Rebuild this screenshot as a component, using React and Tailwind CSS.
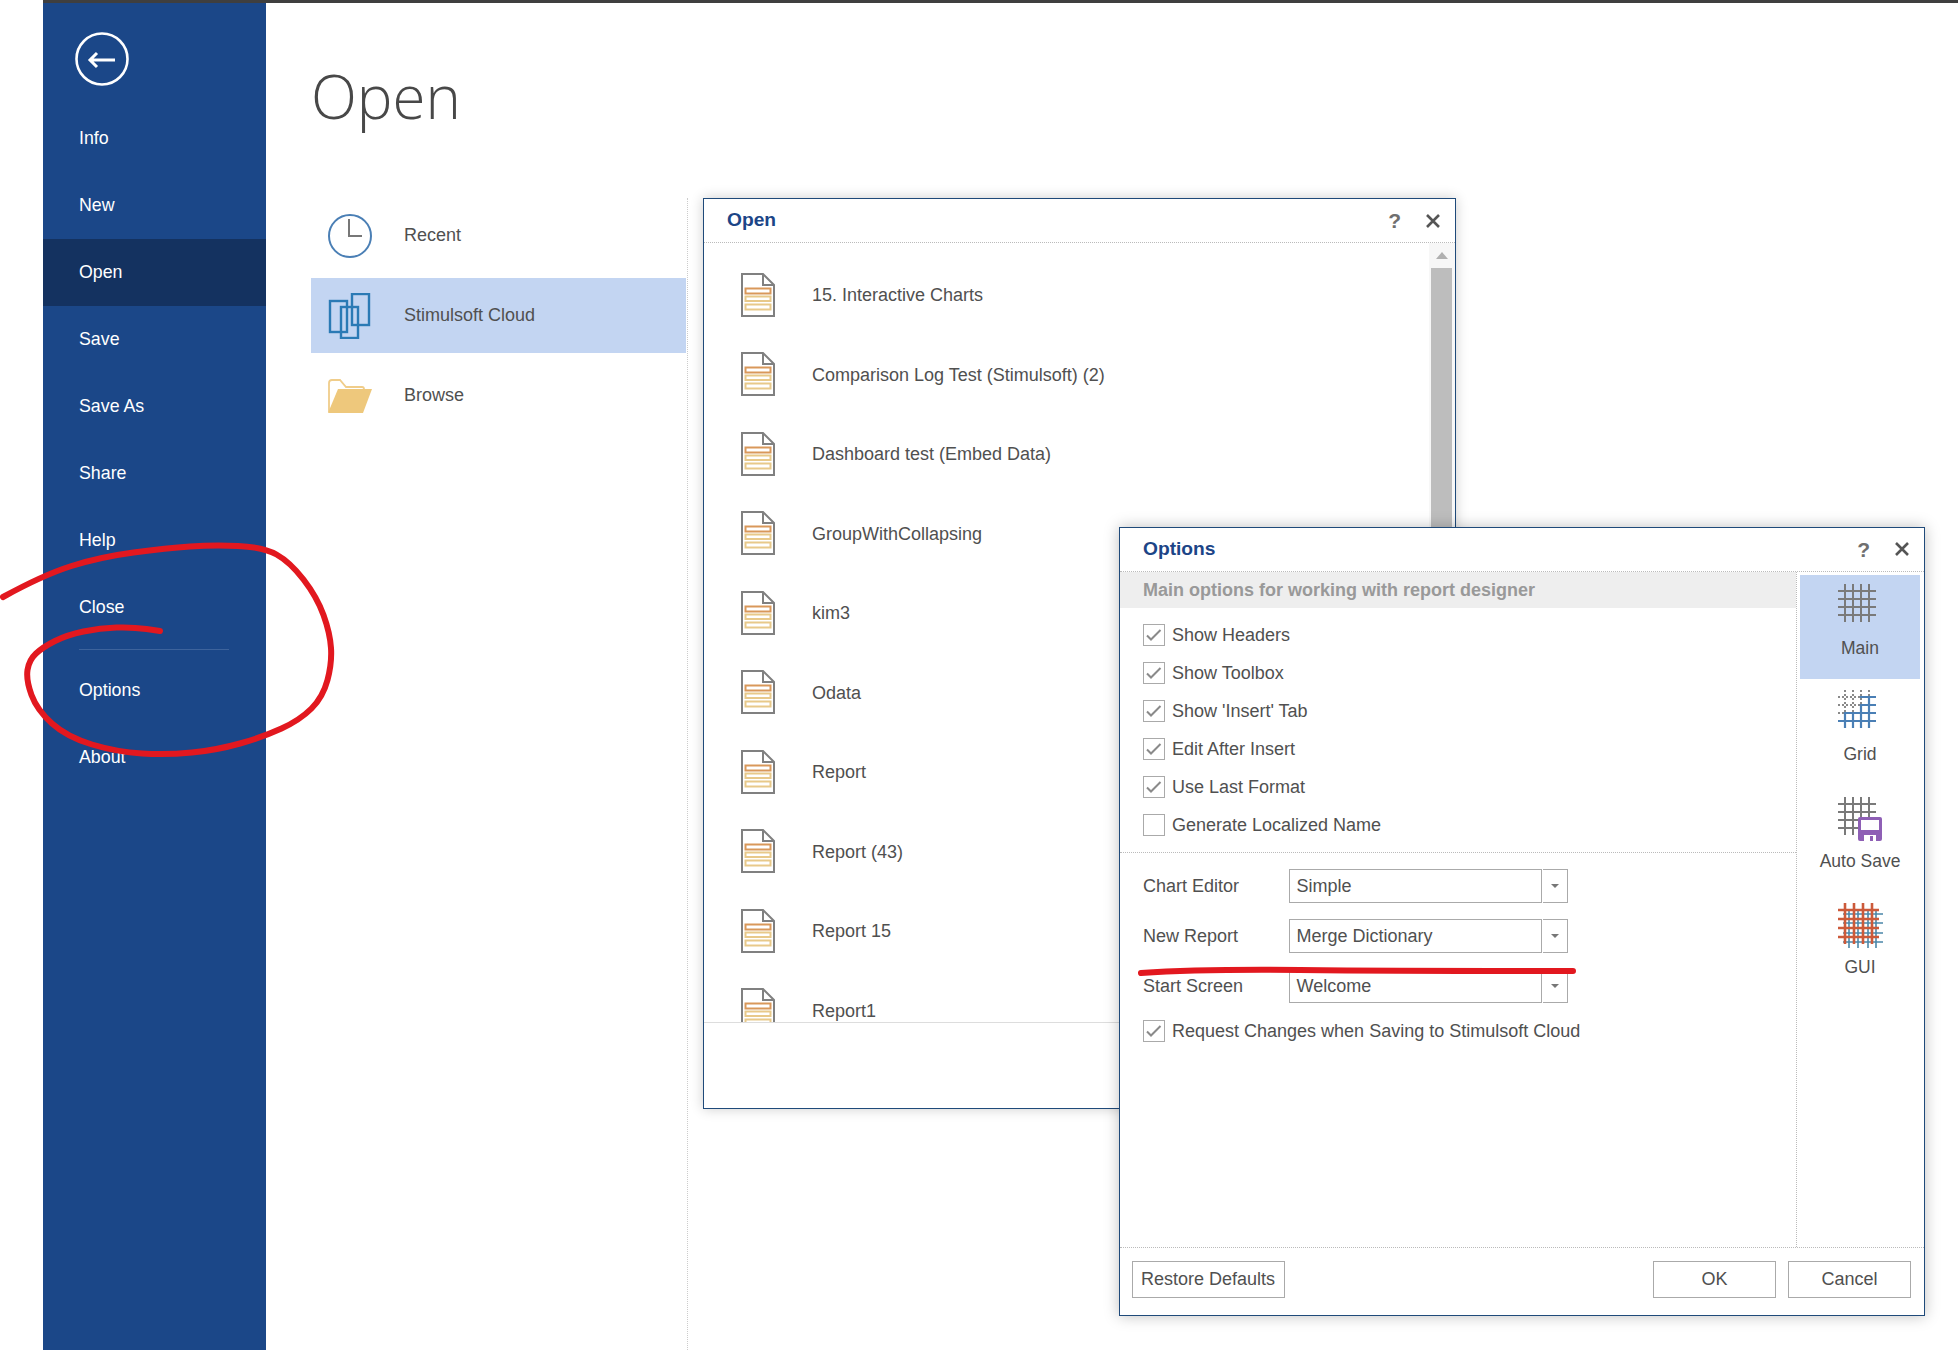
import React from 'react';

const SIDE = ['Info', 'New', 'Open', 'Save', 'Save As', 'Share', 'Help', 'Close'];
const FILES = ['15. Interactive Charts', 'Comparison Log Test (Stimulsoft) (2)', 'Dashboard test (Embed Data)', 'GroupWithCollapsing', 'kim3', 'Odata', 'Report', 'Report (43)', 'Report 15', 'Report1'];
const CHECKS = [["Show Headers", true], ["Show Toolbox", true], ["Show 'Insert' Tab", true], ["Edit After Insert", true], ["Use Last Format", true], ["Generate Localized Name", false]];
const SELECTS = [["Chart Editor", "Simple"], ["New Report", "Merge Dictionary"], ["Start Screen", "Welcome"]];

function smooth(pts) {
  let d = `M${pts[0][0]} ${pts[0][1]}`;
  for (let i = 1; i < pts.length - 1; i++) {
    const mx = (pts[i][0] + pts[i + 1][0]) / 2;
    const my = (pts[i][1] + pts[i + 1][1]) / 2;
    d += ` Q${pts[i][0]} ${pts[i][1]} ${mx} ${my}`;
  }
  const l = pts[pts.length - 1];
  return d + ` L${l[0]} ${l[1]}`;
}
const LOOP = [[3,597],[43,575],[100,557],[167,548],[213,545],[263,547],[290,562],[317,597],[330,633],[332,663],[323,697],[300,720],[263,737],[217,750],[167,755],[117,752],[67,737],[37,710],[26,680],[29,660],[43,647],[67,635],[100,628],[133,627],[160,631]];

function FileIcon() {
  return (
    <svg width="34" height="44" viewBox="0 0 34 44" fill="none" className="shrink-0">
      <path d="M1 1H22L33 12V43H1Z" stroke="#808080" strokeWidth="2" fill="#fff" />
      <path d="M22 1V12H33" stroke="#808080" strokeWidth="2" />
      <rect x="4.5" y="15.5" width="25" height="5" stroke="#d9985a" strokeWidth="2" />
      <rect x="4.5" y="23.5" width="25" height="4.5" stroke="#e8c98a" strokeWidth="2" />
      <rect x="4.5" y="31.5" width="25" height="5" stroke="#e8c98a" strokeWidth="2" />
    </svg>
  );
}

function CloseIcon() {
  return (
    <svg width="14" height="14" viewBox="0 0 14 14" fill="none">
      <path d="M1 1L13 13M13 1L1 13" stroke="#555" strokeWidth="2.6" />
    </svg>
  );
}

function DialogHeader({ title, h }) {
  return (
    <div className={`flex items-center justify-between border-b border-dotted border-[#bbbbbb] shrink-0 pl-[23px] ${h}`}>
      <span className="text-[19.2px] font-bold text-[#1c4587]">{title}</span>
      <div className="flex items-center gap-[25px] mr-[15px]">
        <span className="text-[21px] font-bold text-[#6f6f6f]">?</span>
        <CloseIcon />
      </div>
    </div>
  );
}

function Check({ label, on }) {
  return (
    <div className="flex items-center h-[38px] gap-[7px]">
      <div className="w-[22px] h-[22px] border border-[#aaaaaa] bg-white flex items-center justify-center shrink-0">
        {on && (
          <svg width="20" height="20" viewBox="0 0 20 20" fill="none">
            <path d="M3 10.5L7 14.5L16.5 5" stroke="#8a8a8a" strokeWidth="2" />
          </svg>
        )}
      </div>
      <span className="pt-[2px]">{label}</span>
    </div>
  );
}

function MainIcon() {
  const v = [7, 15, 23, 31];
  return (
    <svg width="38" height="38" viewBox="0 0 38 38">
      {v.map((p) => <path key={'v' + p} d={`M${p} 0V38`} stroke="#7a7a7a" strokeWidth="2" />)}
      {v.map((p) => <path key={'h' + p} d={`M0 ${p}H38`} stroke="#7a7a7a" strokeWidth="2" />)}
    </svg>
  );
}

function GridIcon() {
  const v = [7, 15, 23, 31];
  const g = '#8a8a8a';
  const b = '#4a7fb5';
  return (
    <svg width="38" height="38" viewBox="0 0 38 38">
      {v.map((p) => <path key={'v' + p} d={`M${p} 0V38`} stroke={g} strokeWidth="2" strokeDasharray="2 2" />)}
      {v.map((p) => <path key={'h' + p} d={`M0 ${p}H38`} stroke={g} strokeWidth="2" strokeDasharray="2 2" />)}
      <path d="M31 6V38M23 14V38M15 22V38M7 22V38" stroke={b} strokeWidth="2.2" fill="none" />
      <path d="M22 7H38M22 15H38M7 23H38M0 31H38" stroke={b} strokeWidth="2.2" fill="none" />
    </svg>
  );
}

function AutoSaveIcon() {
  const v = [7, 15, 23, 31];
  return (
    <svg width="44" height="44" viewBox="0 0 44 44" className="overflow-visible">
      {v.map((p) => <path key={'v' + p} d={`M${p} 0V38`} stroke="#7a7a7a" strokeWidth="2" />)}
      {v.map((p) => <path key={'h' + p} d={`M0 ${p}H38`} stroke="#7a7a7a" strokeWidth="2" />)}
      <rect x="20" y="20" width="24" height="24" rx="2" fill="#8e5fb5" />
      <rect x="23" y="23" width="18" height="10" fill="#fff" />
      <path d="M26 44V38H38V44Z" fill="#fff" />
      <rect x="32" y="39" width="3" height="5" fill="#8e5fb5" />
    </svg>
  );
}

function GuiIcon() {
  const o = '#cc5a3a';
  const b = '#4a86a8';
  return (
    <svg width="46" height="46" viewBox="0 0 46 46">
      {[12, 21, 31, 39].map((p) => <path key={'bv' + p} d={`M${p} 6V45`} stroke={b} strokeWidth="1.6" />)}
      {[11, 20, 30, 39].map((p) => <path key={'bh' + p} d={`M6 ${p}H46`} stroke={b} strokeWidth="1.6" />)}
      {[8, 17, 26, 35].map((p) => <path key={'ov' + p} d={`M${p} 0V41`} stroke={o} strokeWidth="2.6" />)}
      {[7, 16, 25, 34].map((p) => <path key={'oh' + p} d={`M1 ${p}H42`} stroke={o} strokeWidth="2.6" />)}
    </svg>
  );
}

function Tab({ label, active, children, top }) {
  return (
    <div className={`h-[104px] flex flex-col items-center text-[17.5px] ${active ? 'bg-[#c3d5f2]' : ''}`}>
      <div className={`h-[58px] w-[46px] flex pt-[9px] ${top}`}>{children}</div>
      <span className="mt-[2px]">{label}</span>
    </div>
  );
}

function Btn({ children, w }) {
  return (
    <div className={`h-[37px] border border-[#aaaaaa] flex items-center justify-center pt-[1px] ${w}`}>{children}</div>
  );
}

export default function App() {
  return (
    <div className="relative w-[1958px] h-[1350px] overflow-hidden bg-white pl-[43px] flex flex-col font-['Liberation_Sans',Arial,sans-serif] text-[18px] text-[#505050]">
      <div className="h-[3px] bg-[#3f3f3f] shrink-0" />
      <div className="flex flex-1 min-h-0">
        {/* Sidebar */}
        <nav className="w-[223px] bg-[#1b4788] text-white text-[17.8px] shrink-0">
          <div className="h-[101.5px] pl-[31px] pt-[28px]">
            <svg width="56" height="56" viewBox="0 0 56 56" fill="none">
              <circle cx="28" cy="28" r="25.5" stroke="#fff" strokeWidth="2.6" />
              <path d="M41 29H16M23 22L16 29L23 36" stroke="#fff" strokeWidth="3" />
            </svg>
          </div>
          {SIDE.map((s) => (
            <div key={s} className={`h-[67px] flex items-center pl-[36px] ${s === 'Open' ? 'bg-[#143260]' : ''}`}>{s}</div>
          ))}
          <div className="mt-[8px] mb-[7px] ml-[36px] w-[150px] h-[1.5px] bg-[#3d639c]" />
          <div className="h-[67px] flex items-center pl-[36px]">Options</div>
          <div className="h-[67px] flex items-center pl-[36px]">About</div>
        </nav>

        {/* Main */}
        <main className="flex-1 min-w-0 flex flex-col pl-[45px]">
          <div className="h-[195px] shrink-0 pt-[53px]">
            <h1 className="font-['Open_Sans',sans-serif] font-light text-[60px] leading-[80px] text-[#484848]">Open</h1>
          </div>
          <div className="w-[377px] flex-1 border-r border-dotted border-[#cccccc] pr-[1px] flex flex-col gap-[5px]">
            <div className="h-[75px] flex items-center pl-[17px] gap-[32px]">
              <svg width="44" height="44" viewBox="0 0 44 44" fill="none">
                <circle cx="22" cy="22" r="21" stroke="#4a7fb5" strokeWidth="2" />
                <path d="M21 5V22H34" stroke="#777" strokeWidth="2" />
              </svg>
              <span>Recent</span>
            </div>
            <div className="h-[75px] flex items-center pl-[17px] gap-[32px] bg-[#c3d5f2]">
              <svg width="44" height="46" viewBox="0 0 44 46" fill="none">
                <rect x="2" y="8" width="17" height="31" stroke="#2b7ab5" strokeWidth="2.4" />
                <rect x="13" y="14" width="17" height="31" stroke="#2b7ab5" strokeWidth="2.4" />
                <rect x="24" y="1" width="17" height="31" stroke="#2b7ab5" strokeWidth="2.4" />
              </svg>
              <span>Stimulsoft Cloud</span>
            </div>
            <div className="h-[75px] flex items-center pl-[17px] gap-[32px]">
              <svg width="44" height="34" viewBox="0 0 44 34" fill="none">
                <path d="M1 33V4Q1 1 4 1H12L18 8H34Q36 8 36 10" stroke="#f0cd8a" strokeWidth="1.8" />
                <path d="M0 34L10 10H44L35 34Z" fill="#eec87c" />
              </svg>
              <span>Browse</span>
            </div>
          </div>
        </main>
      </div>

      {/* Open dialog */}
      <section className="absolute left-[703px] top-[198px] w-[753px] h-[911px] bg-white border-[1.5px] border-[#1f4a7a] shadow-[0_0_12px_rgba(0,0,0,0.2)] flex flex-col">
        <DialogHeader title="Open" h="h-[44px]" />
        <div className="h-[780px] flex shrink-0 overflow-hidden border-b border-[#dddddd]">
          <div className="flex-1 pt-[12px] pl-[37px] overflow-hidden">
            {FILES.map((f) => (
              <div key={f} className="h-[79.5px] flex items-center gap-[37px]">
                <FileIcon />
                <span className="pt-[2px]">{f}</span>
              </div>
            ))}
          </div>
          <div className="w-[26px] shrink-0 flex flex-col items-center bg-[#f7f7f7] pr-[3px] pl-[2px]">
            <div className="h-[25px] flex items-center">
              <div className="w-0 h-0 border-x-[6px] border-x-transparent border-b-[7px] border-b-[#b0b0b0]" />
            </div>
            <div className="w-full flex-1 bg-[#bdbdbd]" />
          </div>
        </div>
      </section>

      {/* Options dialog */}
      <section className="absolute left-[1119px] top-[527px] w-[806px] h-[789px] bg-white border-[1.5px] border-[#1f4a7a] shadow-[0_0_14px_rgba(0,0,0,0.25)] flex flex-col">
        <DialogHeader title="Options" h="h-[43.5px]" />
        <div className="flex-1 flex min-h-0">
          <div className="flex-1 min-w-0">
            <div className="h-[36px] flex items-center pl-[23px] pt-[2px] bg-[#eeeeee] font-bold text-[#999999]">Main options for working with report designer</div>
            <div className="pl-[23px] py-[8px] border-b border-dotted border-[#bbbbbb]">
              {CHECKS.map(([l, on]) => <Check key={l} label={l} on={on} />)}
            </div>
            <div className="pl-[23px] pt-[16.5px] flex flex-col gap-[16.5px]">
              {SELECTS.map(([l, v]) => (
                <div key={l} className="flex items-center h-[33.5px]">
                  <span className="w-[146px] shrink-0 pt-[2px]">{l}</span>
                  <div className="w-[253px] h-full border border-[#aaaaaa] flex items-center pl-[6.5px] pt-[2px]">{v}</div>
                  <div className="w-[25px] h-full border border-[#aaaaaa] border-l-0 flex items-center justify-center ml-[1px]">
                    <div className="w-0 h-0 border-x-[4px] border-x-transparent border-t-[4px] border-t-[#777777]" />
                  </div>
                </div>
              ))}
            </div>
            <div className="pl-[23px] mt-[9px]">
              <Check label="Request Changes when Saving to Stimulsoft Cloud" on />
            </div>
          </div>
          <div className="w-[128px] shrink-0 border-l border-dotted border-[#bbbbbb] pl-[3px] pr-[4px] pt-[3px] flex flex-col gap-[2.5px]">
            <Tab label="Main" active top="pl-[1px]"><MainIcon /></Tab>
            <Tab label="Grid" top="pl-[1px]"><GridIcon /></Tab>
            <Tab label="Auto Save" top="pl-[1px]"><AutoSaveIcon /></Tab>
            <Tab label="GUI" top="pl-[0px]"><GuiIcon /></Tab>
          </div>
        </div>
        <div className="h-[68px] shrink-0 border-t border-dotted border-[#bbbbbb] flex items-start pt-[12.5px] justify-between pl-[11.5px] pr-[13px]">
          <Btn w="w-[153px]">Restore Defaults</Btn>
          <div className="flex gap-[12px]">
            <Btn w="w-[123px]">OK</Btn>
            <Btn w="w-[123px]">Cancel</Btn>
          </div>
        </div>
      </section>

      {/* Hand drawn annotation */}
      <svg className="absolute left-0 top-0 pointer-events-none" width="1958" height="1350" fill="none">
        <path d={smooth(LOOP)} stroke="#e2181f" strokeWidth="6" strokeLinecap="round" strokeLinejoin="round" />
        <path d="M1141 973Q1200 969 1300 970T1573 971" stroke="#e2181f" strokeWidth="6" strokeLinecap="round" />
      </svg>
    </div>
  );
}
